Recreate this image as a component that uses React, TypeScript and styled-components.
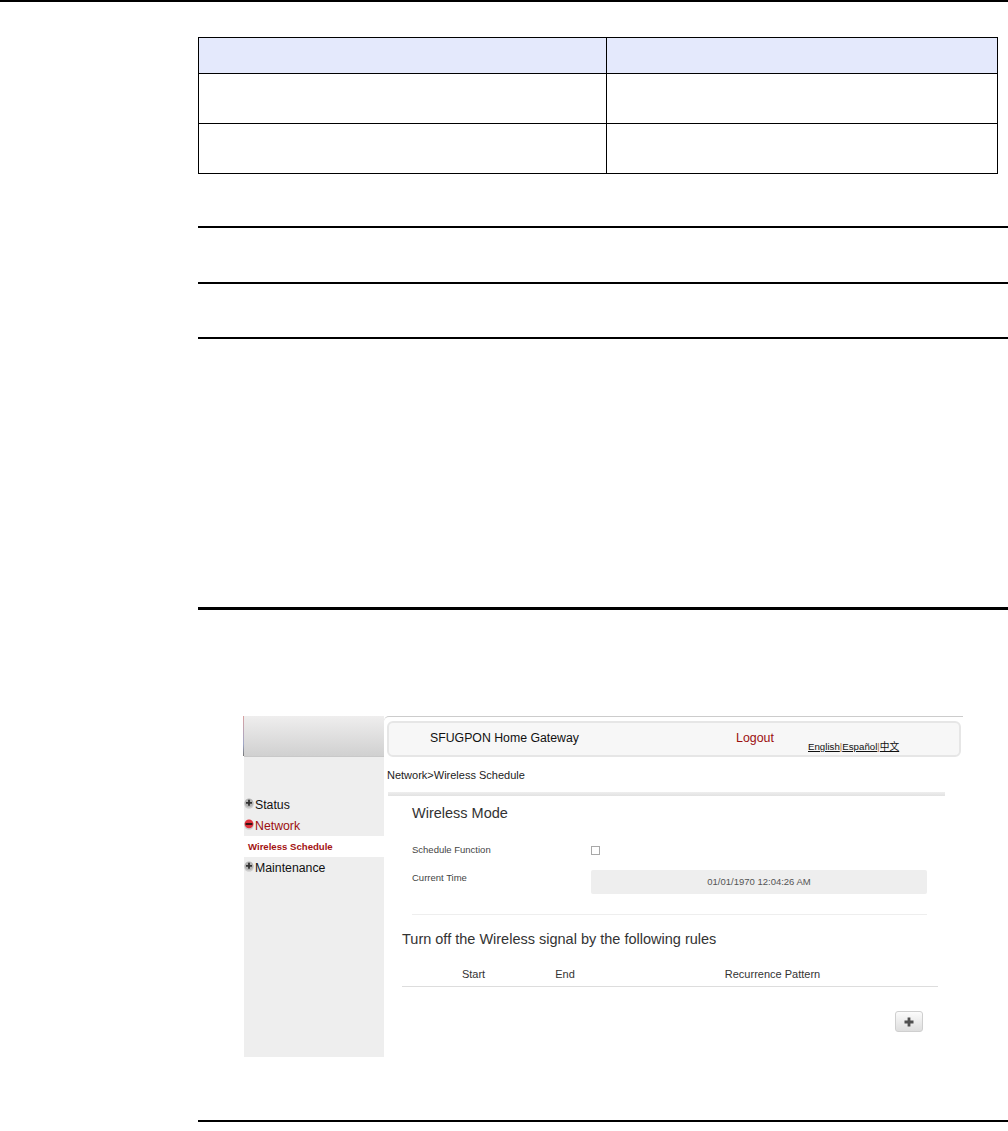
import { createGlobalStyle } from "styled-components"
import styled from "styled-components"

const GlobalStyle = createGlobalStyle`
html, body {
  margin: 0;
  padding: 0;
  background: #ffffff;
}
body {
  font-family: "Liberation Sans", Arial, sans-serif;
}
`

const menuItems = [
  { name: 'Status', open: false },
  { name: 'Network', open: true },
  { name: 'Maintenance', open: false },
]

const columns = [
  { name: 'Start', left: 48, width: 47 },
  { name: 'End', left: 40, width: 56 },
  { name: 'Recurrence Pattern', left: 72, width: 215 },
]

const ToggleIcon = ({ open }: { open: boolean }) => (
  <IconBox viewBox="0 0 10 11" width="10" height="11">
    <ellipse cx="5" cy="6" rx="4.8" ry="4.8" fill="#cfcfcf" />
    <circle cx="5" cy="4.8" r="4.4" fill={open ? '#e0323c' : '#b4b4b4'} />
    {open
      ? <path d="M1.6 4h6.8v2H1.6z" fill="#3a1414" />
      : <path d="M4.1 1.8h1.8v2.1H8v1.8H5.9v2.1H4.1V5.7H2V3.9h2.1z" fill="#333333" />}
  </IconBox>
)

const App = () => {
  return (
    <Page>
      <GlobalStyle />
      <TopRule />
      <Content>
        <DocTable>
          <HeadRow><HeadCell /><HeadCell $last /></HeadRow>
          <BodyRow><BodyCell /><BodyCell $last /></BodyRow>
          <BodyRow $last><BodyCell /><BodyCell $last /></BodyRow>
        </DocTable>
        <NoteRules>
          <ThinRule />
          <ThinRule />
          <ThinRule />
        </NoteRules>
        <SectionRule />
        <Shot>
          <Sidebar>
            <SideHead />
            <Menu>
              {menuItems.map((m) => (
                <MenuGroup key={m.name}>
                  <MenuItem $open={m.open}>
                    <ToggleIcon open={m.open} />
                    <span>{m.name}</span>
                  </MenuItem>
                  {m.open && <SubItem>Wireless Schedule</SubItem>}
                </MenuGroup>
              ))}
            </Menu>
          </Sidebar>
          <Main>
            <HeaderBar>
              <Brand>SFUGPON Home Gateway</Brand>
              <Logout>Logout</Logout>
              <Langs>
                <LangLink>English</LangLink><Sep>|</Sep>
                <LangLink>Español</LangLink><Sep>|</Sep>
                <LangLink>中文</LangLink>
              </Langs>
            </HeaderBar>
            <Crumb>Network&gt;Wireless Schedule</Crumb>
            <CrumbRule />
            <FormArea>
              <FormTitle>Wireless Mode</FormTitle>
              <FieldRow>
                <FieldLabel>Schedule Function</FieldLabel>
                <Check />
              </FieldRow>
              <FieldRow $time>
                <FieldLabel>Current Time</FieldLabel>
                <TimeBox>01/01/1970 12:04:26 AM</TimeBox>
              </FieldRow>
              <FormRule />
            </FormArea>
            <RulesArea>
              <RulesTitle>Turn off the Wireless signal by the following rules</RulesTitle>
              <RulesHead>
                {columns.map((c) => (
                  <RulesCol key={c.name} $left={c.left} $width={c.width}>{c.name}</RulesCol>
                ))}
              </RulesHead>
              <AddRow>
                <AddButton aria-label="add">
                  <svg viewBox="0 0 10 10" width="10" height="10">
                    <path d="M3.6 0.5h2.8v3.1h3.1v2.8H6.4v3.1H3.6V6.4H0.5V3.6h3.1z" fill="#4f4f4f" />
                  </svg>
                </AddButton>
              </AddRow>
            </RulesArea>
          </Main>
        </Shot>
        <BottomRule />
      </Content>
    </Page>
  )
}

export default App

const Page = styled.div`
width: 1008px;
height: 1131px;
overflow: hidden;
background: #ffffff;
`

const TopRule = styled.div`
height: 2px;
background: #000000;
`

const Content = styled.div`
padding: 35px 0 0 198px;
`

const DocTable = styled.div`
width: 800px;
border: 1px solid #000000;
box-sizing: border-box;
`

const HeadRow = styled.div`
display: grid;
grid-template-columns: 408px 1fr;
height: 36px;
background: #e4e9fc;
border-bottom: 1px solid #000000;
box-sizing: border-box;
`

const BodyRow = styled.div<{ $last?: boolean }>`
display: grid;
grid-template-columns: 408px 1fr;
height: ${(p) => (p.$last ? '49px' : '50px')};
border-bottom: ${(p) => (p.$last ? 'none' : '1px solid #000000')};
box-sizing: border-box;
`

const HeadCell = styled.div<{ $last?: boolean }>`
border-right: ${(p) => (p.$last ? 'none' : '1px solid #000000')};
`

const BodyCell = styled.div<{ $last?: boolean }>`
border-right: ${(p) => (p.$last ? 'none' : '1px solid #000000')};
`

const NoteRules = styled.div`
display: flex;
flex-direction: column;
gap: 54px;
margin-top: 52px;
`

const ThinRule = styled.div`
height: 2px;
background: #000000;

&:last-child {
  margin-top: -1px;
}
`

const SectionRule = styled.div`
height: 3px;
background: #000000;
margin-top: 268px;
`

const Shot = styled.div`
display: flex;
width: 719px;
height: 341px;
margin: 106px 0 0 46px;
font-size: 11px;
`

const Sidebar = styled.div`
width: 140px;
flex: none;
background: #eeeeee;
display: flex;
flex-direction: column;
`

const SideHead = styled.div`
position: relative;
height: 41px;
background: linear-gradient(#efeeee, #d0d0d0);
border-bottom: 1px solid #c8c8c8;
box-sizing: border-box;

&::before {
  content: '';
  position: absolute;
  left: -1px;
  top: 0;
  width: 1px;
  height: 40px;
  background: linear-gradient(#d9a0a0, #a0a8c8 70%, #777777);
}
`

const Menu = styled.div`
padding-top: 37px;
display: flex;
flex-direction: column;
`

const MenuGroup = styled.div`
display: flex;
flex-direction: column;
`

const MenuItem = styled.div<{ $open: boolean }>`
height: 21px;
display: flex;
align-items: center;
font-size: 12.3px;
color: ${(p) => (p.$open ? '#9c0f0f' : '#111111')};
svg {
  margin-top: -3px;
  margin-right: 1px;
}
`

const IconBox = styled.svg`
flex: none;
`

const SubItem = styled.div`
height: 21px;
background: #ffffff;
color: #a31212;
font-size: 9.6px;
font-weight: bold;
line-height: 21px;
padding-left: 4px;
`

const Main = styled.div`
flex: 1;
min-width: 0;
border-top: 1px solid #cccccc;
border-top-left-radius: 5px;
`

const HeaderBar = styled.div`
position: relative;
width: 574px;
height: 36px;
margin: 4px 0 0 3px;
box-sizing: border-box;
background: #f7f7f7;
border: 2px solid #e6e6e6;
border-radius: 6px;
`

const Brand = styled.div`
position: absolute;
left: 41px;
top: 8px;
font-size: 12.3px;
color: #111111;
`

const Logout = styled.div`
position: absolute;
left: 347px;
top: 8px;
font-size: 12.4px;
color: #9c0f0f;
`

const Langs = styled.div`
position: absolute;
left: 419px;
top: 16px;
font-size: 9.7px;
color: #111111;
white-space: nowrap;
font-family: "Liberation Sans", "Noto Sans CJK SC", sans-serif;
`

const LangLink = styled.span`
text-decoration: underline;
`

const Sep = styled.span`
color: #b87333;
text-decoration: underline;
text-decoration-color: #111111;
`

const Crumb = styled.div`
margin: 11px 0 0 3px;
height: 15px;
line-height: 15px;
font-size: 11px;
color: #222222;
`

const CrumbRule = styled.div`
width: 557px;
height: 4px;
margin: 9px 0 0 4px;
background: linear-gradient(#eeeeee, #e2e2e2);
`

const FormArea = styled.div`
width: 515px;
margin-left: 28px;
`

const FormTitle = styled.div`
font-size: 14.5px;
color: #333333;
margin-top: 9px;
line-height: 17px;
`

const FieldRow = styled.div<{ $time?: boolean }>`
display: flex;
align-items: ${(p) => (p.$time ? 'flex-start' : 'center')};
margin-top: ${(p) => (p.$time ? '13px' : '21px')};
height: ${(p) => (p.$time ? '24px' : '14px')};
`

const FieldLabel = styled.div`
width: 179px;
flex: none;
font-size: 9.5px;
color: #444444;
line-height: 16px;
`

const Check = styled.div`
width: 9px;
height: 9px;
margin-top: 1px;
box-sizing: border-box;
border: 1px solid #a8a8a8;
background: #ffffff;
`

const TimeBox = styled.div`
width: 336px;
height: 24px;
background: #eeeeee;
border-radius: 2px;
text-align: center;
line-height: 24px;
font-size: 9.5px;
color: #555555;
`

const FormRule = styled.div`
height: 1px;
margin-top: 20px;
background: #eeeeee;
`

const RulesArea = styled.div`
width: 536px;
margin-left: 18px;
`

const RulesTitle = styled.div`
margin-top: 15px;
font-size: 14.5px;
line-height: 18px;
color: #333333;
`

const RulesHead = styled.div`
display: flex;
height: 25px;
margin-top: 14px;
box-sizing: border-box;
border-bottom: 1px solid #dddddd;
`

const RulesCol = styled.div<{ $left: number; $width: number }>`
width: ${(p) => p.$width}px;
margin-left: ${(p) => p.$left}px;
flex: none;
text-align: center;
font-size: 11px;
line-height: 24px;
color: #333333;
`

const AddRow = styled.div`
display: flex;
justify-content: flex-end;
padding: 24px 15px 0 0;
`

const AddButton = styled.button`
width: 28px;
height: 21px;
padding: 0;
display: flex;
align-items: center;
justify-content: center;
border: 1px solid #cfcfcf;
border-radius: 3px;
background: linear-gradient(#fbfbfb, #dedede);
`

const BottomRule = styled.div`
height: 2px;
background: #000000;
margin-top: 63px;
`
